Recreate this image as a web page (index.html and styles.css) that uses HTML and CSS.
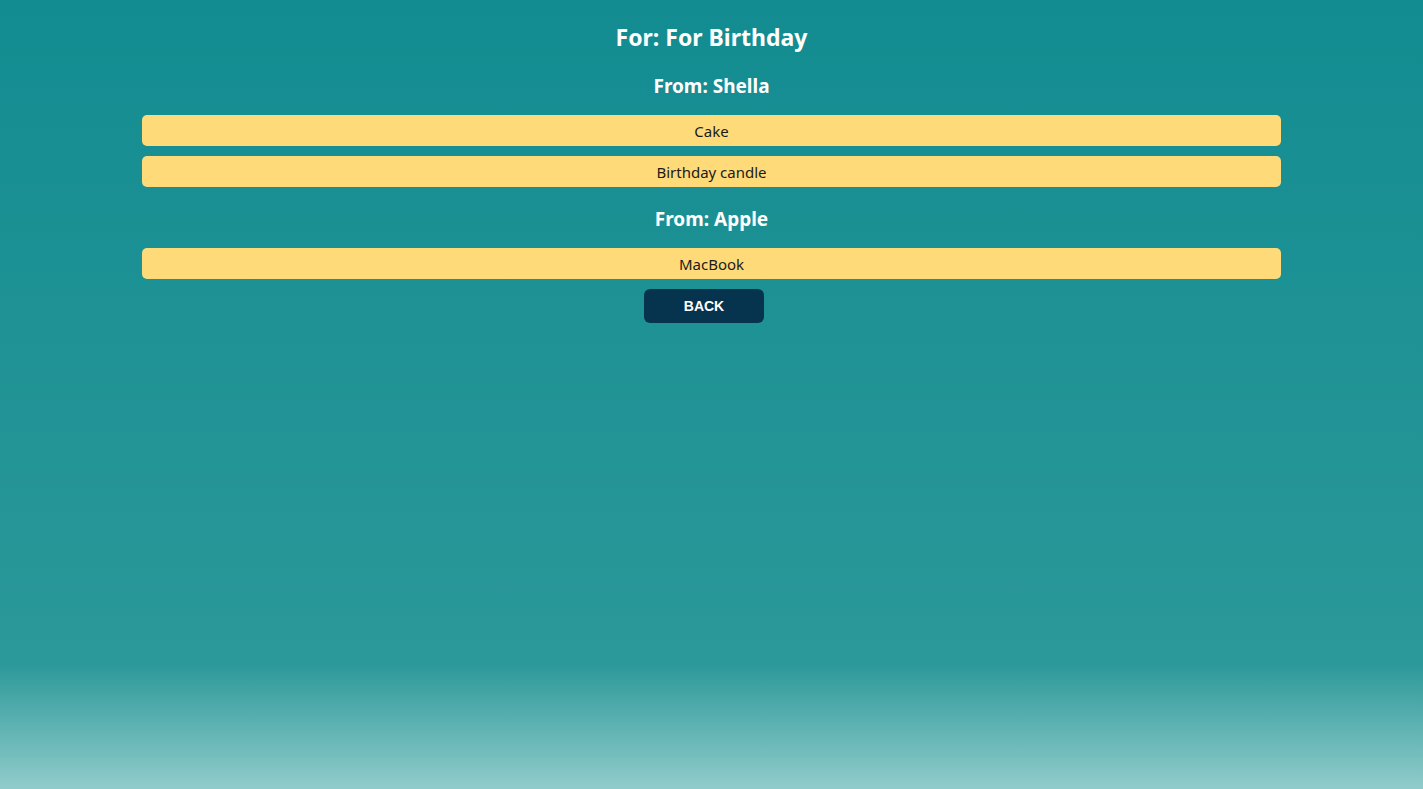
FILE: index.html
```html
<!DOCTYPE html>
<html>
<head>
<meta charset="utf-8">
<link rel="stylesheet" href="styles.css">
</head>
<body>
<main class="page">
  <h1 class="title">For: For Birthday</h1>
  <section class="group">
    <h2 class="from">From: Shella</h2>
    <ul class="items">
      <li class="item">Cake</li>
      <li class="item">Birthday candle</li>
    </ul>
  </section>
  <section class="group">
    <h2 class="from">From: Apple</h2>
    <ul class="items">
      <li class="item">MacBook</li>
    </ul>
  </section>
  <div class="actions">
    <button class="back">BACK</button>
  </div>
</main>
</body>
</html>
```
FILE: styles.css
```css
html, body {
  margin: 0;
  padding: 0;
}
body {
  min-height: 100vh;
  background: linear-gradient(to bottom, #128c91 0%, #2b9899 84%, #91cccb 100%);
  font-family: "Noto Sans", "Open Sans", sans-serif;
  color: #fff;
}
.page {
  width: 1139px;
  margin: 0 auto;
  padding-top: 21px;
  display: flex;
  flex-direction: column;
}
.title {
  margin: 0 0 21px;
  font-size: 23px;
  line-height: 32px;
  font-weight: 700;
  text-align: center;
}
.group {
  display: flex;
  flex-direction: column;
}
.group + .group {
  margin-top: 20px;
}
.from {
  margin: 0 0 17px;
  font-size: 19px;
  line-height: 24px;
  font-weight: 700;
  text-align: center;
}
.items {
  list-style: none;
  margin: 0;
  padding: 0;
  display: flex;
  flex-direction: column;
  gap: 10px;
}
.item {
  height: 31px;
  line-height: 32px;
  background: #ffda79;
  border-radius: 5px;
  color: #1a1a1a;
  font-size: 15px;
  text-align: center;
}
.actions {
  display: flex;
  justify-content: center;
  margin-top: 10px;
}
.back {
  width: 120px;
  height: 34px;
  margin-right: 15px;
  border: none;
  border-radius: 6px;
  background: #06344f;
  color: #fff;
  font-family: "Liberation Sans", Arial, sans-serif;
  font-weight: 700;
  font-size: 14px;
  cursor: pointer;
}
```
